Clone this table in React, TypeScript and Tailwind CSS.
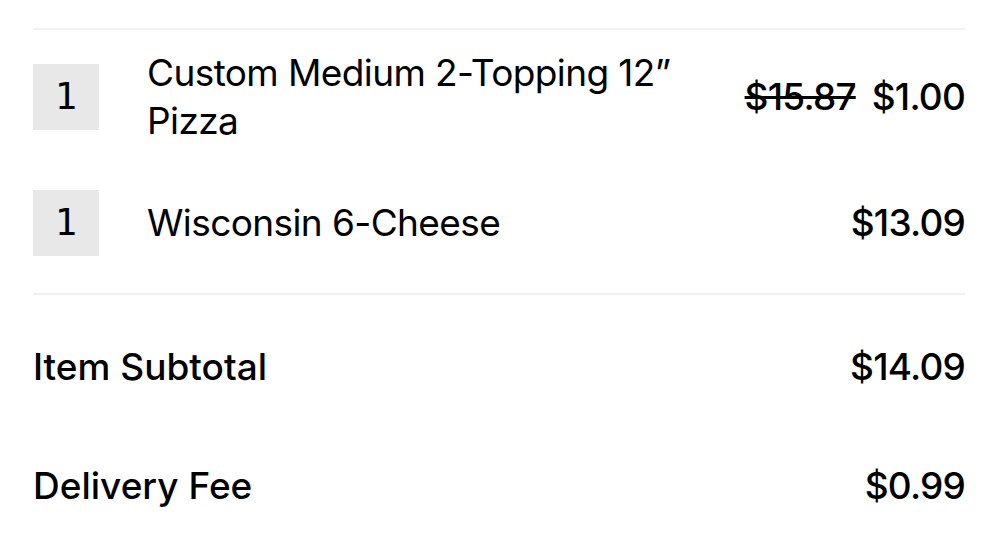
const ITEMS = [
  { qty: 1, name: 'Custom Medium 2-Topping 12\u201d Pizza', oldPrice: '$15.87', price: '$1.00' },
  { qty: 1, name: 'Wisconsin 6-Cheese', price: '$13.09' },
]

const TOTALS = [
  { label: 'Item Subtotal', value: '$14.09' },
  { label: 'Delivery Fee', value: '$0.99' },
]

export default function App() {
  return (
    <div className="w-[997px] h-[540px] bg-white text-black overflow-hidden pl-[33px] pr-[32px] font-['Inter',sans-serif]">
      <div className="mt-[28px] h-[2px] bg-[#f1f1f1]" />

      {/* Items */}
      <div className="pt-[19px] flex flex-col gap-[45px]">
        {ITEMS.map((item, i) => (
          <div key={i} className="flex items-center">
            <div className="w-[66px] h-[66px] shrink-0 bg-[#e8e8e8] flex items-center justify-center text-[37px] font-['DejaVu_Sans_Mono',monospace]">
              {item.qty}
            </div>
            <div className="ml-[48px] flex-1 min-w-0 text-[37px] leading-[48px] tracking-[-0.6px]">{item.name}</div>
            <div className="ml-[24px] shrink-0 flex items-center gap-[16px] text-[37px] leading-[48px] font-medium tracking-[-0.8px]">
              {item.oldPrice && <span className="line-through">{item.oldPrice}</span>}
              <span>{item.price}</span>
            </div>
          </div>
        ))}
      </div>

      <div className="mt-[37px] h-[2px] bg-[#f1f1f1]" />

      {/* Totals */}
      <div className="pt-[48px] flex flex-col gap-[71px]">
        {TOTALS.map((t) => (
          <div key={t.label} className="flex items-center justify-between text-[37px] leading-[48px] font-medium">
            <span>{t.label}</span>
            <span className="tracking-[-0.8px]">{t.value}</span>
          </div>
        ))}
      </div>
    </div>
  )
}
